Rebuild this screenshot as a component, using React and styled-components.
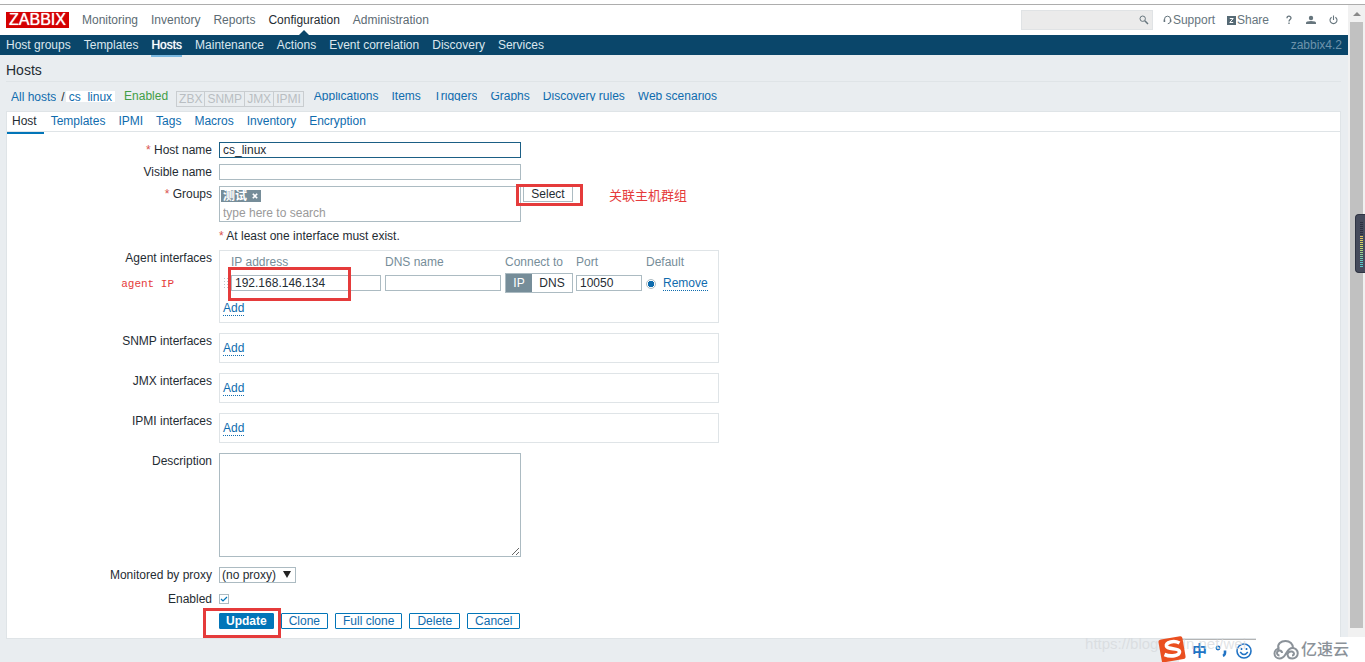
import React from "react";
import styled, { createGlobalStyle, css } from "styled-components";

const c = {
  text: "#1f2c33",
  muted: "#768d99",
  link: "#0f6cae",
  nav: "#0a466a",
  page: "#e9edf0",
  line: "#dfe4e7",
  field: "#acbbc2",
  mark: "#e53b3b",
};

const Global = createGlobalStyle`
  *, *::before, *::after { box-sizing: border-box; }
  body { margin: 0; background: ${c.page}; color: ${c.text}; }
  body, button, input, textarea, select {
    font-family: "Liberation Sans", Arial, "Noto Sans CJK SC", sans-serif;
    font-size: 12px;
    line-height: 16px;
  }
  a { text-decoration: none; color: ${c.link}; }
`;

const Page = styled.div`
  position: relative;
  min-height: 100vh;
  overflow: hidden;
`;
const BrowserEdge = styled.div`
  height: 5px;
  background: #fff;
  border-bottom: 1px solid #adadad;
`;
const Frame = styled.div`
  display: flex;
`;
const Main = styled.div`
  flex: 1;
  min-width: 0;
`;

const Scrollbar = styled.div`
  width: 17px;
  flex: none;
  display: flex;
  flex-direction: column;
  padding: 0 2px 11px;
  background: #f1f1f1;
`;
const ScrollArrow = styled.div`
  height: 17px;
  display: grid;
  place-items: center;
`;
const Thumb = styled.div`
  flex: 1;
  background: #c1c1c1;
`;

const Header = styled.header`
  height: 30px;
  display: flex;
  align-items: center;
  justify-content: space-between;
  padding: 0 10px 0 6px;
  background: #fff;
`;
const Row = styled.div`
  display: flex;
  align-items: center;
`;
const Logo = styled.a`
  width: 63px;
  height: 16px;
  margin-right: 13px;
  display: flex;
  align-items: center;
  justify-content: center;
  background: #d40000;
  color: #fff;
  font-size: 16px;
  text-shadow: 0 0 1px #fff;
`;
const TopMenu = styled.nav`
  display: flex;
  gap: 13px;
`;
const TopLink = styled.a`
  position: relative;
  line-height: 30px;
  color: ${(p) => (p.$active ? c.text : "#5c6b73")};
  ${(p) =>
    p.$active &&
    css`
      &::after {
        content: "";
        position: absolute;
        left: 50%;
        bottom: 0;
        margin-left: -5px;
        border: 5px solid transparent;
        border-top: 0;
        border-bottom-color: ${c.nav};
      }
    `}
`;
const Search = styled.label`
  width: 132px;
  height: 20px;
  display: flex;
  align-items: center;
  padding: 0 3px;
  margin-right: 10px;
  border: 1px solid #e0e3e5;
  background: #ebebeb;
  input {
    flex: 1;
    min-width: 0;
    border: 0;
    padding: 0;
    background: transparent;
    outline: none;
  }
`;
const Tools = styled.div`
  display: flex;
  align-items: center;
  gap: 12px;
`;
const ToolLink = styled.a`
  display: flex;
  align-items: center;
  gap: 1px;
  color: #66757d;
`;
const IconButtons = styled.div`
  display: flex;
  align-items: center;
  gap: 13px;
  padding-left: 4px;
`;

const SubNav = styled.nav`
  height: 20px;
  display: flex;
  gap: 13px;
  padding: 0 6px;
  background: ${c.nav};
`;
const SubLink = styled.a`
  height: 22px;
  line-height: 20px;
  color: #dbe7ee;
  ${(p) =>
    p.$active &&
    css`
      color: #fff;
      text-shadow: 0 0 1px #fff;
      border-bottom: 2px solid #7ab8e0;
    `}
`;
const ServerName = styled.span`
  margin-left: auto;
  line-height: 20px;
  color: #6e93aa;
`;

const Title = styled.h1`
  margin: 0 7px 0 6px;
  height: 27px;
  border-bottom: 1px solid ${c.line};
  font-size: 14px;
  font-weight: normal;
  line-height: 30px;
`;
const HostBar = styled.div`
  height: 29px;
  display: flex;
  align-items: center;
  padding: 0 11px;
`;
const Crumb = styled.a`
  height: 12px;
  line-height: 12px;
  overflow: hidden;
  ${(p) =>
    p.$current &&
    css`
      height: 11px;
      padding: 0 3px;
      background: #fff;
    `}
`;
const Slash = styled.span`
  padding: 0 1px 0 5px;
`;
const Status = styled.span`
  padding: 0 8px 2px 9px;
  color: #429e47;
`;
const Availability = styled.div`
  display: flex;
  margin: 5px 10px 0 0;
  border-left: 1px solid #c9cdd0;
`;
const Avail = styled.span`
  padding: 0 2px;
  line-height: 14px;
  border: 1px solid #c9cdd0;
  border-left: 0;
  color: #b9bec2;
`;
const HostLinks = styled.nav`
  display: flex;
  gap: 13px;
`;
const HostLink = styled.a`
  height: 9px;
  line-height: 8px;
  overflow: hidden;
`;

const Panel = styled.main`
  position: relative;
  margin: 0 7px 0 6px;
  border: 1px solid ${c.line};
  background: #fff;
`;
const Tabs = styled.nav`
  height: 20px;
  display: flex;
  gap: 1px;
  border-bottom: 1px solid ${c.line};
`;
const Tab = styled.a`
  height: 22px;
  padding: 0 6px;
  line-height: 19px;
  ${(p) =>
    p.$active &&
    css`
      padding: 0 7px 0 5px;
      color: ${c.text};
      border-bottom: 2px solid #0275b8;
    `}
`;

const Form = styled.form`
  padding: 10px 0 9px;
`;
const Field = styled.div`
  display: grid;
  grid-template-columns: 205px minmax(0, 1fr);
  column-gap: 7px;
  margin-top: ${(p) => p.$top || 0}px;
`;
const Label = styled.label`
  text-align: right;
`;
const Caption = styled.span`
  text-align: right;
`;
const Star = styled.span`
  color: #d9534f;
`;
const Input = styled.input`
  display: block;
  width: ${(p) => p.$w}px;
  height: 16px;
  padding: 0 3px;
  line-height: 14px;
  border: 1px solid ${c.field};
  background: #fff;
  color: ${c.text};
  outline: none;
  &:focus, &[data-current] { border-color: #1b5f85; }
`;

const Marked = styled.div`
  position: relative;
`;
const Mark = styled.div`
  position: absolute;
  pointer-events: none;
  border: 3px solid ${c.mark};
  ${(p) => css`
    top: ${p.$box[0]}px;
    right: ${p.$box[1]}px;
    bottom: ${p.$box[2]}px;
    left: ${p.$box[3]}px;
  `}
`;

const Groups = styled.div`
  display: flex;
  align-items: flex-start;
  gap: 2px;
`;
const MultiSelect = styled.div`
  width: 302px;
  height: 36px;
  padding: 3px 1px 0;
  border: 1px solid ${c.field};
  input {
    display: block;
    width: 100%;
    height: 16px;
    padding: 0 2px;
    margin-top: 3px;
    border: 0;
    outline: none;
    &::placeholder { color: #9a9a9a; opacity: 1; }
  }
`;
const Tag = styled.span`
  display: flex;
  align-items: center;
  justify-content: space-between;
  width: 40px;
  height: 12px;
  padding: 0 3px 0 2px;
  background: #768d99;
  color: #fff;
  font-weight: bold;
  line-height: 12px;
`;
const TagRemove = styled.button`
  display: flex;
  padding: 0;
  border: 0;
  background: none;
`;
const SelectButton = styled.button`
  width: 50px;
  height: 16px;
  padding: 0;
  line-height: 14px;
  border: 1px solid ${c.field};
  background: #fff;
  color: ${c.text};
`;
const Note = styled.span`
  padding: 2px 0 0 34px;
  color: ${c.mark};
  font-size: 13px;
`;
const LabelNote = styled.span`
  display: block;
  margin-top: 10px;
  padding-right: 38px;
  color: ${c.mark};
  font-family: "Liberation Mono", monospace;
  font-size: 11px;
`;

const InterfaceBox = styled.div`
  width: 500px;
  padding: ${(p) => (p.$filled ? "3px 3px 6px" : "6px 3px")};
  border: 1px solid ${c.line};
`;
const Table = styled.table`
  width: 100%;
  table-layout: fixed;
  border-collapse: collapse;
  margin-bottom: 7px;
  th, td { padding: 0; text-align: left; font-weight: normal; }
  th { height: 16px; color: ${c.muted}; }
  td { height: 23px; padding-top: 3px; vertical-align: middle; }
`;
const Grip = styled.div`
  width: 5px;
  height: 12px;
  background-image: radial-gradient(#b8c3c9 1px, transparent 1px);
  background-size: 3px 3px;
`;
const Segments = styled.div`
  display: flex;
  width: 68px;
  height: 20px;
  border: 1px solid ${c.field};
`;
const Segment = styled.button`
  flex: ${(p) => (p.$on ? "0 0 26px" : "1")};
  padding: 0;
  border: 0;
  line-height: 18px;
  background: ${(p) => (p.$on ? c.muted : "#fff")};
  color: ${(p) => (p.$on ? "#fff" : c.text)};
`;
const Radio = styled.input`
  appearance: none;
  display: block;
  width: 10px;
  height: 10px;
  margin: 1px 0 0;
  border: 1px solid ${c.field};
  border-radius: 50%;
  background: #fff;
  &:checked { background: radial-gradient(circle, #0f6cae 0 3px, #fff 3px); }
`;
const Action = styled.a`
  display: inline-block;
  line-height: 14px;
  border-bottom: 1px dotted ${c.link};
`;

const Description = styled.textarea`
  display: block;
  width: 302px;
  height: 104px;
  padding: 2px 3px;
  border: 1px solid ${c.field};
  outline: none;
  resize: both;
`;
const SelectWrap = styled.div`
  position: relative;
  width: 77px;
  select {
    appearance: none;
    display: block;
    width: 100%;
    height: 16px;
    padding: 0 0 0 2px;
    line-height: 14px;
    border: 1px solid ${c.field};
    border-radius: 0;
    background: #fff;
    color: ${c.text};
  }
  svg {
    position: absolute;
    right: 5px;
    top: 4px;
    pointer-events: none;
  }
`;
const Check = styled.span`
  position: relative;
  width: 10px;
  height: 10px;
  margin-top: 3px;
  input {
    appearance: none;
    display: block;
    width: 10px;
    height: 10px;
    margin: 0;
    border: 1px solid ${c.field};
    background: #fff;
  }
  svg {
    position: absolute;
    left: 1px;
    top: 1px;
    pointer-events: none;
  }
`;
const Buttons = styled.div`
  display: flex;
  gap: 7px;
`;
const Button = styled.button`
  height: 16px;
  padding: 0 ${(p) => (p.$primary ? 6 : 7)}px;
  line-height: 14px;
  border: 1px solid #0275b8;
  border-radius: 1px;
  background: ${(p) => (p.$primary ? "#0275b8" : "#fff")};
  color: ${(p) => (p.$primary ? "#fff" : c.link)};
  font-weight: ${(p) => (p.$primary ? "bold" : "normal")};
`;

const SideGauge = styled.div`
  position: absolute;
  right: 0;
  top: 214px;
  width: 10px;
  height: 59px;
  padding: 7px 2px 5px 4px;
  border: 1px solid #2f3443;
  border-right: 0;
  border-radius: 4px 0 0 4px;
  background: #464b5c;
`;
const GaugeBars = styled.div`
  height: 100%;
  background:
    repeating-linear-gradient(transparent 0 1px, #464b5c 1px 2px),
    linear-gradient(#2c3040 0 28%, #e8c060 28%, #c5d86a 55%, #58c8c8 90%);
`;
const Corner = styled.div`
  position: absolute;
  right: 0;
  bottom: 0;
  display: flex;
  align-items: flex-end;
`;
const InputLogo = styled.svg`
  position: relative;
  z-index: 1;
`;
const Watermark = styled.span`
  position: absolute;
  right: 119px;
  bottom: 8px;
  z-index: 1;
  font-size: 15px;
  line-height: 20px;
  color: rgba(214, 217, 220, 0.75);
`;
const InputMethod = styled.div`
  display: flex;
  align-items: center;
  gap: 8px;
  height: 23px;
  padding: 0 4px 0 13px;
  margin-left: -7px;
  border-top: 1px solid #b4b4b4;
  background: #fff;
  color: #2173c4;
  font-size: 15px;
  font-weight: bold;
`;
const Brand = styled.div`
  display: flex;
  align-items: center;
  gap: 2px;
  height: 25px;
  padding: 0 16px 0 17px;
  background: #fff;
  color: #8b9299;
  font-size: 16px;
  font-weight: 500;
`;

const topItems = ["Monitoring", "Inventory", "Reports", "Configuration", "Administration"];
const subItems = ["Host groups", "Templates", "Hosts", "Maintenance", "Actions", "Event correlation", "Discovery", "Services"];
const hostItems = ["Applications", "Items", "Triggers", "Graphs", "Discovery rules", "Web scenarios"];
const tabItems = ["Host", "Templates", "IPMI", "Tags", "Macros", "Inventory", "Encryption"];

function HeaderTools() {
  return (
    <Row>
      <Search>
        <input type="text" aria-label="Search" />
        <svg width="10" height="10" viewBox="0 0 10 10" fill="none" stroke="#66757d">
          <circle cx="3.7" cy="3.7" r="2.7" />
          <path d="M5.8 5.8 9 9" strokeWidth="1.5" />
        </svg>
      </Search>
      <Tools>
        <ToolLink href="#support">
          <svg width="9" height="10" viewBox="0 0 9 10" fill="none" stroke="#66757d">
            <path d="M1.5 6.5V4.2a3 3 0 0 1 6 0v2.3M7.5 6.5Q7.3 8.5 4.8 8.7" />
            <path d="M1.4 4.5v2.6M7.6 4.5v2.6" strokeWidth="1.6" />
          </svg>
          Support
        </ToolLink>
        <ToolLink href="#share">
          <svg width="9" height="9" viewBox="0 0 9 9">
            <path d="M0 0h9v9H0z" fill="#566a75" />
            <path d="M2.8 2.5h3.4L2.8 6.5h3.4" fill="none" stroke="#fff" />
          </svg>
          Share
        </ToolLink>
        <IconButtons>
          <ToolLink href="#help" aria-label="Help">
            <svg width="8" height="10" viewBox="0 0 8 10" fill="none" stroke="#66757d" strokeWidth="1.3">
              <path d="M2 3.2C2 .6 6 .6 6 3 6 4.6 4 4.6 4 6.5M4 7.6V9" />
            </svg>
          </ToolLink>
          <ToolLink href="#profile" aria-label="Profile">
            <svg width="10" height="10" viewBox="0 0 10 10" fill="#66757d">
              <circle cx="5" cy="3" r="2.2" />
              <path d="M0 9V7.6Q0 6 5 6t5 1.6V9z" />
            </svg>
          </ToolLink>
          <ToolLink href="#signout" aria-label="Sign out">
            <svg width="9" height="10" viewBox="0 0 9 10" fill="none" stroke="#66757d" strokeWidth="1.1">
              <path d="M2.6 2.2a3.5 3.5 0 1 0 3.8 0M4.5.5V5" />
            </svg>
          </ToolLink>
        </IconButtons>
      </Tools>
    </Row>
  );
}

function AgentInterfaces() {
  return (
    <InterfaceBox $filled>
      <Marked>
        <Table>
          <colgroup>
            {[8, 154, 120, 71, 70, 17].map((w) => (
              <col key={w} width={w} />
            ))}
            <col />
          </colgroup>
          <thead>
            <tr>
              <th />
              <th>IP address</th>
              <th>DNS name</th>
              <th>Connect to</th>
              <th>Port</th>
              <th colSpan={2}>Default</th>
            </tr>
          </thead>
          <tbody>
            <tr>
              <td><Grip /></td>
              <td><Input $w={150} defaultValue="192.168.146.134" aria-label="IP address" /></td>
              <td><Input $w={116} aria-label="DNS name" /></td>
              <td>
                <Segments>
                  <Segment type="button" $on>IP</Segment>
                  <Segment type="button">DNS</Segment>
                </Segments>
              </td>
              <td><Input $w={66} defaultValue="10050" aria-label="Port" /></td>
              <td><Radio type="radio" name="default" defaultChecked aria-label="Default" /></td>
              <td><Action href="#remove">Remove</Action></td>
            </tr>
          </tbody>
        </Table>
        <Mark $box={[13, 364, -8, 5]} />
      </Marked>
      <Action href="#add">Add</Action>
    </InterfaceBox>
  );
}

function HostForm() {
  return (
    <Form onSubmit={(e) => e.preventDefault()}>
      <Field>
        <Label htmlFor="host"><Star>*</Star> Host name</Label>
        <Input id="host" $w={302} data-current="" defaultValue="cs_linux" />
      </Field>
      <Field $top={6}>
        <Label htmlFor="visible">Visible name</Label>
        <Input id="visible" $w={302} />
      </Field>
      <Field $top={6}>
        <Label htmlFor="groups"><Star>*</Star> Groups</Label>
        <Groups>
          <MultiSelect>
            <Tag>
              测试
              <TagRemove type="button" aria-label="Remove 测试">
                <svg width="6" height="6" viewBox="0 0 6 6" stroke="#fff" strokeWidth="1.6">
                  <path d="m.8.8 4.4 4.4M5.2.8.8 5.2" />
                </svg>
              </TagRemove>
            </Tag>
            <input id="groups" placeholder="type here to search" />
          </MultiSelect>
          <Marked>
            <SelectButton type="button">Select</SelectButton>
            <Mark $box={[-2, -10, -4, -7]} />
          </Marked>
          <Note>关联主机群组</Note>
        </Groups>
      </Field>
      <Field $top={6}>
        <span />
        <span><Star>*</Star> At least one interface must exist.</span>
      </Field>
      <Field $top={6}>
        <Caption>
          Agent interfaces
          <LabelNote>agent IP</LabelNote>
        </Caption>
        <AgentInterfaces />
      </Field>
      {["SNMP", "JMX", "IPMI"].map((kind) => (
        <Field $top={10} key={kind}>
          <Caption>{kind} interfaces</Caption>
          <InterfaceBox><Action href="#add">Add</Action></InterfaceBox>
        </Field>
      ))}
      <Field $top={10}>
        <Label htmlFor="description">Description</Label>
        <Description id="description" />
      </Field>
      <Field $top={10}>
        <Label htmlFor="proxy">Monitored by proxy</Label>
        <SelectWrap>
          <select id="proxy"><option>(no proxy)</option></select>
          <svg width="8" height="7" viewBox="0 0 8 7"><path d="M0 0h8L4 7z" fill="#222" /></svg>
        </SelectWrap>
      </Field>
      <Field $top={8}>
        <Label htmlFor="enabled">Enabled</Label>
        <Check>
          <input id="enabled" type="checkbox" defaultChecked />
          <svg width="8" height="8" viewBox="0 0 8 8" fill="none" stroke="#0275b8" strokeWidth="1.2">
            <path d="M1 4l2 2 4-4" />
          </svg>
        </Check>
      </Field>
      <Field $top={6}>
        <span />
        <Buttons>
          <Marked>
            <Button $primary>Update</Button>
            <Mark $box={[-5, -7, -9, -16]} />
          </Marked>
          {["Clone", "Full clone", "Delete", "Cancel"].map((t) => (
            <Button type="button" key={t}>{t}</Button>
          ))}
        </Buttons>
      </Field>
    </Form>
  );
}

export default function App() {
  return (
    <Page>
      <Global />
      <BrowserEdge />
      <Frame>
        <Main>
          <Header>
            <Row>
              <Logo href="#home">ZABBIX</Logo>
              <TopMenu>
                {topItems.map((t) => (
                  <TopLink href="#menu" key={t} $active={t === "Configuration"}>{t}</TopLink>
                ))}
              </TopMenu>
            </Row>
            <HeaderTools />
          </Header>
          <SubNav>
            {subItems.map((t) => (
              <SubLink href="#section" key={t} $active={t === "Hosts"}>{t}</SubLink>
            ))}
            <ServerName>zabbix4.2</ServerName>
          </SubNav>
          <Title>Hosts</Title>
          <HostBar>
            <Crumb href="#all">All hosts</Crumb>
            <Slash>/</Slash>
            <Crumb href="#host" $current>cs_linux</Crumb>
            <Status>Enabled</Status>
            <Availability>
              {["ZBX", "SNMP", "JMX", "IPMI"].map((t) => <Avail key={t}>{t}</Avail>)}
            </Availability>
            <HostLinks>
              {hostItems.map((t) => <HostLink href="#list" key={t}>{t}</HostLink>)}
            </HostLinks>
          </HostBar>
          <Panel>
            <Tabs>
              {tabItems.map((t) => (
                <Tab href="#tab" key={t} $active={t === "Host"}>{t}</Tab>
              ))}
            </Tabs>
            <HostForm />
          </Panel>
        </Main>
        <Scrollbar>
          <ScrollArrow>
            <svg width="8" height="4" viewBox="0 0 8 4"><path d="M0 4h8L4 0z" fill="#8a8a8a" /></svg>
          </ScrollArrow>
          <Thumb />
        </Scrollbar>
      </Frame>
      <SideGauge><GaugeBars /></SideGauge>
      <Corner>
        <Watermark>https://blog.csdn.net/wei</Watermark>
        <InputLogo width="28" height="26" viewBox="0 0 28 26">
          <path d="M3 3.500 22 .3Q24 0 24.400 2L27.500 20Q28 22.500 25.500 23L8 26H4L.5 6.500Q0 4 3 3.500z" fill="#ea4f20" />
          <path d="M21.500 7C16 4 7.500 6 8.500 10.200c1 3.600 12.500 1.300 13 5.300.5 4.500-9 5.500-15 3" fill="none" stroke="#fff" strokeWidth="3.600" />
        </InputLogo>
        <InputMethod>
          <span>中</span>
          <svg width="13" height="12" viewBox="0 0 13 12" fill="none" stroke="#2173c4" strokeWidth="1.5">
            <circle cx="3" cy="3" r="1.7" />
            <path d="M10 5.500v2.500q0 2-2 3" strokeWidth="2.6" />
          </svg>
          <svg width="16" height="16" viewBox="0 0 16 16" fill="none" stroke="#2173c4" strokeWidth="1.6">
            <circle cx="8" cy="8" r="7" />
            <path d="M5.500 5v2M10.500 5v2M4.200 9q3.800 5 7.600 0" />
          </svg>
        </InputMethod>
        <Brand>
          <svg width="26" height="20" viewBox="0 0 26 20" fill="none" stroke="#8b9299" strokeWidth="2">
            <path d="M5.500 8.500C4 4 8 1 12.500 1c4.500 0 7.500 3 7.500 7" />
            <path d="M9 13a2.500 2.500 0 1 0-2.500 2.500M6.500 8.500a5 5 0 0 0 0 10c4 0 5-2.500 6.500-5s3-5.500 6.500-5.500a5.200 5.200 0 0 1 0 10.500c-3.500 0-5-2-5-4.500a4 4 0 0 1 4.500-2.500q2 .500 2 2.200a2 2 0 0 1-2 1.800" />
          </svg>
          亿速云
        </Brand>
      </Corner>
    </Page>
  );
}
